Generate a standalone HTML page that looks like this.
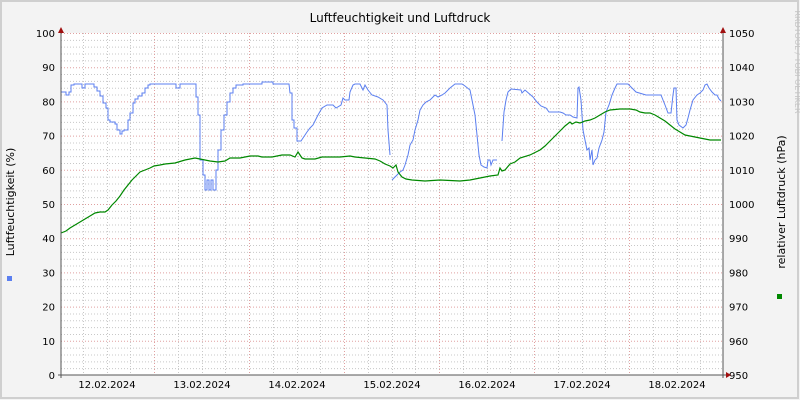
<!DOCTYPE html>
<html><head><meta charset="utf-8"><style>
html,body{margin:0;padding:0;width:800px;height:400px;overflow:hidden;background:#f3f3f3}
svg{display:block}
text{font-family:"DejaVu Sans","Liberation Sans",sans-serif;}
</style></head><body>
<svg id="s" width="800" height="400" xmlns="http://www.w3.org/2000/svg">
<rect x="0" y="0" width="800" height="400" fill="#f3f3f3"/>
<rect x="1" y="1" width="797" height="397" fill="none" stroke="#cfcfcf" stroke-width="2"/>
<rect x="61" y="33" width="662" height="342" fill="#ffffff"/>
<g id="grid"></g>
<text x="400" y="22" font-size="12" text-anchor="middle" fill="#000">Luftfeuchtigkeit und Luftdruck</text>
<text transform="translate(14,202) rotate(-90)" font-size="11" text-anchor="middle" fill="#000">Luftfeuchtigkeit (%)</text>
<text transform="translate(785,202) rotate(-90)" font-size="11" text-anchor="middle" fill="#000">relativer Luftdruck (hPa)</text>
<text transform="translate(795,62) rotate(90)" font-size="8" text-anchor="middle" fill="#c4c4c4">RRDTOOL / TOBI OETIKER</text>
<rect x="7" y="276" width="5" height="5" fill="#5b7ff0"/>
<rect x="777" y="294" width="5" height="5" fill="#008800"/>
<g id="labels" font-size="10" fill="#000"></g>
<polyline fill="none" stroke="#5b7ff0" stroke-width="1" points="61,92 66,92 66,95 69,95 69,92 71,92 71,85 74,85 74,84 82,84 82,88 85,88 85,84 94,84 94,87 97,87 97,91 100,91 100,96 103,96 103,103 106,103 106,108 108,108 108,120 110,120 110,122 115,122 115,124 117,124 117,130 120,130 120,134 122,134 122,131 124,131 124,130 128,130 128,120 130,120 130,113 133,113 133,103 135,103 135,99 138,99 138,96 142,96 142,93 145,93 145,88 148,88 148,85 150,85 150,84 176,84 176,88 180,88 180,84 196,84 196,97 198,97 198,115 200,115 200,160 203,160 203,175 205,175 205,190 207,190 207,180 209,180 209,190 211,190 211,180 213,180 213,190 216,190 216,170 218,170 218,150 221,150 221,130 224,130 224,115 227,115 227,102 230,102 230,93 233,93 233,88 236,88 236,85 243,85 243,84 262,84 262,82 273,82 273,84 289,84 290,93 292,93 292,120 294,120 294,128 297,128 297,141 301,141 303,138 307,132 310,128 313,125 318,115 322,108 327,105 333,105 336,108 341,105 343,98 345,100 349,100 350,92 353,85 355,84 360,84 363,90 365,85 368,90 372,95 378,97 383,100 387,105 388,130 390,155"/>
<polyline fill="none" stroke="#5b7ff0" stroke-width="1" points="392,180 395,177 397,175 400,172 403,170 405,165 408,155 410,145 413,140 415,130 418,120 420,110 423,105 426,102 430,100 433,97 435,95 438,97 442,95 445,93 450,88 455,84 462,84 465,86 470,90 472,100 475,115 477,135 479,155 481,165 484,167 487,168 488,160 490,160 491,165 493,160 497,160"/>
<polyline fill="none" stroke="#5b7ff0" stroke-width="1" points="502,141 504,112 506,100 508,92 511,89 521,90 522,93 525,90 533,97 537,102 541,106 546,108 549,112 560,112 563,113 566,115 570,115 573,117 577,118 578,88 579,87 581,100 583,130 585,140 587,150 589,148 590,160 592,150 593,165 595,160 597,158 599,148 602,140 604,132 606,112 609,105 612,95 615,88 617,84 628,84 632,88 636,92 646,95 661,95 663,100 665,105 668,113 671,113 673,95 674,88 676,88 677,120 679,125 683,128 686,125 688,118 690,110 693,100 697,95 700,93 703,90 705,85 707,84 709,88 712,92 715,95 717,95 719,99 721,101"/>
<polyline fill="none" stroke="#008800" stroke-width="1.2" points="61,233 66,231 70,228 75,225 80,222 85,219 90,216 95,213 100,212 105,212 108,210 112,205 116,201 120,196 124,190 128,185 132,180 136,176 140,172 145,170 150,168 154,166 160,165 165,164 175,163 185,160 195,158 200,159 210,161 218,162 225,161 230,158 240,158 250,156 258,156 262,157 272,157 282,155 290,155 295,157 298,152 300,155 302,158 305,159 315,159 322,157 340,157 350,156 355,157 365,158 375,159 380,161 385,164 390,166 393,168 396,165 398,172 402,177 406,179 412,180 425,181 440,180 460,181 470,180 480,178 490,176 498,175 500,168 502,171 505,170 510,164 515,162 520,158 530,155 540,150 545,146 550,141 555,136 560,131 565,126 570,122 572,124 576,122 580,123 585,121 590,120 595,118 600,115 605,112 610,110 620,109 630,109 636,110 640,112 645,113 650,113 655,115 660,118 665,121 670,125 675,129 680,132 685,135 690,136 695,137 700,138 705,139 710,140 715,140 721,140"/>
<line x1="61" y1="30" x2="61" y2="378" stroke="#555"/>
<line x1="58" y1="375" x2="726" y2="375" stroke="#555"/>
<line x1="723" y1="30" x2="723" y2="378" stroke="#555"/>
<polygon points="58,33 64,33 61,27" fill="#a01010"/>
<polygon points="720,33 726,33 723,27" fill="#a01010"/>
<polygon points="726,372 726,378 731,375" fill="#a01010"/>
</svg>
<script>
var ns="http://www.w3.org/2000/svg",g=document.getElementById("grid"),L=document.getElementById("labels");
function ln(x1,y1,x2,y2,c){var l=document.createElementNS(ns,"line");l.setAttribute("x1",x1);l.setAttribute("y1",y1);l.setAttribute("x2",x2);l.setAttribute("y2",y2);l.setAttribute("stroke",c);l.setAttribute("stroke-dasharray","1,2");g.appendChild(l);}
function tx(x,y,s,a){var t=document.createElementNS(ns,"text");t.setAttribute("x",x);t.setAttribute("y",y);t.setAttribute("text-anchor",a);t.textContent=s;L.appendChild(t);}
for(var i=1;i<50;i++){var y=375-i*6.84;if(i%5)ln(61,y+.5,723,y+.5,"#c8c8c8");}
for(var i=1;i<=10;i++){var y=375-i*34.2;ln(61,y+.5,723,y+.5,"#e0a0a0");}
for(var k=-6;k<28;k++){var x=154+k*23.75;if(x<=61||x>=723)continue;ln(Math.round(x)+.5,33,Math.round(x)+.5,375,k%4==0?"#e0a0a0":"#c8c8c8");}
for(var i=0;i<=10;i++){var y=375-i*34.2+4;tx(55,y,String(i*10),"end");tx(729,y,String(950+i*10),"start");}
var d=["12.02.2024","13.02.2024","14.02.2024","15.02.2024","16.02.2024","17.02.2024","18.02.2024"];
for(var i=0;i<7;i++)tx(107+i*95,388,d[i],"middle");
</script>
</body></html>
